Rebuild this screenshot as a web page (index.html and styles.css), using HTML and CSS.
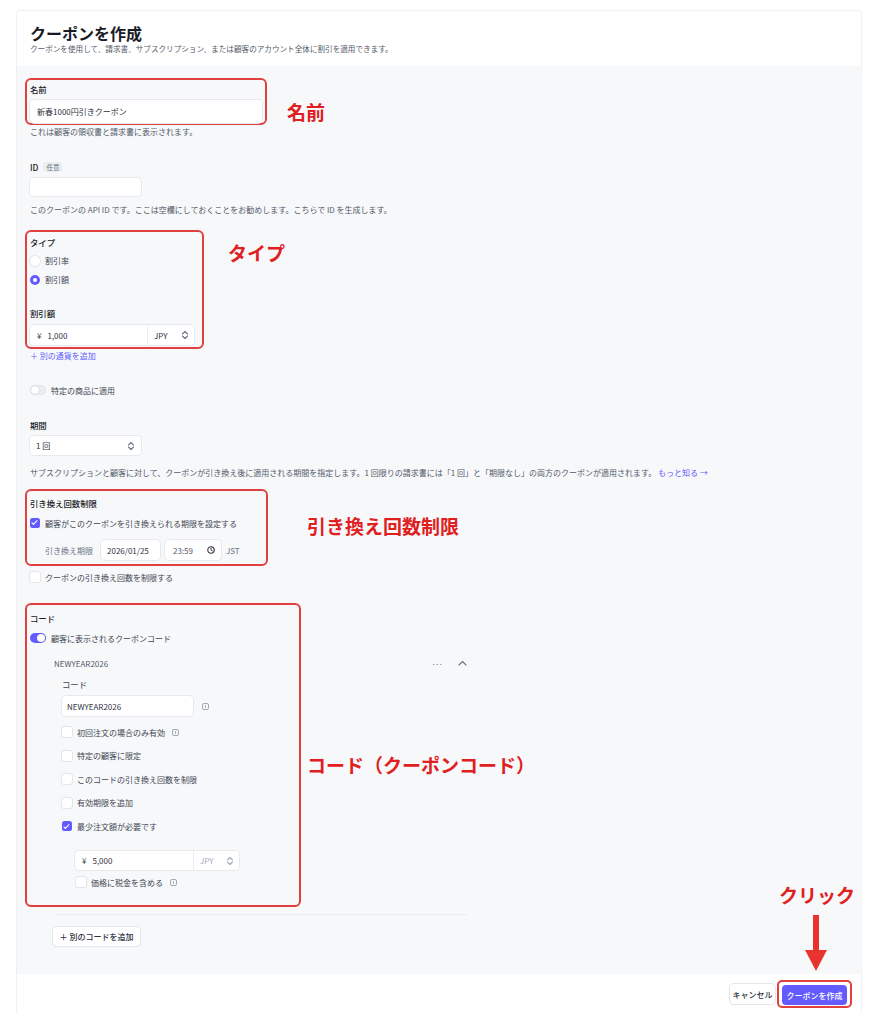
FILE: index.html
```html
<!DOCTYPE html>
<html lang="ja">
<head>
<meta charset="utf-8">
<title>クーポンを作成</title>
<link rel="stylesheet" href="styles.css">
</head>
<body>
<div class="card">
  <header class="head">
    <h1 class="title">クーポンを作成</h1>
    <p class="subtitle">クーポンを使用して、請求書、サブスクリプション、または顧客のアカウント全体に割引を適用できます。</p>
  </header>

  <main class="body">
    <section class="hl hl-name">
      <div class="label">名前</div>
      <div class="input input-name">新春1000円引きクーポン</div>
      <span class="note note-name">名前</span>
    </section>
    <p class="help">これは顧客の領収書と請求書に表示されます。</p>

    <div class="label label-id">ID <span class="badge">任意</span></div>
    <div class="input input-id"></div>
    <p class="help help-id">このクーポンの API ID です。ここは空欄にしておくことをお勧めします。こちらで ID を生成します。</p>

    <section class="hl hl-type">
      <div class="label">タイプ</div>
      <div class="opt-row"><span class="radio"></span>割引率</div>
      <div class="opt-row"><span class="radio on"></span>割引額</div>
      <div class="label label-amount">割引額</div>
      <div class="input money money-type">
        <span class="yen">¥</span><span class="amount">1,000</span>
        <span class="cur">JPY
          <svg class="chev" width="8" height="10" viewBox="0 0 8 10"><path d="M1.5 4 L4 1.5 L6.5 4 M1.5 6 L4 8.5 L6.5 6" fill="none" stroke="#687385" stroke-width="1.1" stroke-linecap="round" stroke-linejoin="round"/></svg>
        </span>
      </div>
      <span class="note note-type">タイプ</span>
    </section>
    <div class="link add-currency">＋ 別の通貨を追加</div>

    <div class="toggle-row toggle-products"><span class="toggle"></span>特定の商品に適用</div>

    <div class="label label-period">期間</div>
    <div class="input select-period">
      <span>1 回</span>
      <svg class="chev" width="8" height="10" viewBox="0 0 8 10"><path d="M1.5 4 L4 1.5 L6.5 4 M1.5 6 L4 8.5 L6.5 6" fill="none" stroke="#687385" stroke-width="1.1" stroke-linecap="round" stroke-linejoin="round"/></svg>
    </div>
    <p class="help help-period">サブスクリプションと顧客に対して、クーポンが引き換え後に適用される期間を指定します。1 回限りの請求書には「1 回」と「期限なし」の両方のクーポンが適用されます。 <span class="link">もっと知る →</span></p>

    <section class="hl hl-limit">
      <div class="label">引き換え回数制限</div>
      <div class="check-row check-deadline"><span class="check on"></span>顧客がこのクーポンを引き換えられる期限を設定する</div>
      <div class="date-row">
        <span class="date-label">引き換え期限</span>
        <span class="input date-input">2026/01/25</span>
        <span class="input time-input">23:59
          <svg width="8" height="8" viewBox="0 0 8 8"><circle cx="4" cy="4" r="3.2" fill="none" stroke="#30313d" stroke-width="1.1"/><path d="M4 2.2 V4 L5.3 4.9" fill="none" stroke="#30313d" stroke-width="1" stroke-linecap="round"/></svg>
        </span>
        <span class="tz">JST</span>
      </div>
      <span class="note note-limit">引き換え回数制限</span>
    </section>
    <div class="check-row check-count"><span class="check"></span>クーポンの引き換え回数を制限する</div>

    <section class="hl hl-code">
      <div class="label">コード</div>
      <div class="toggle-row toggle-code"><span class="toggle on"></span>顧客に表示されるクーポンコード</div>
      <div class="code-head">
        <span class="code-name">NEWYEAR2026</span>
        <span class="code-actions">
          <span class="dots">···</span>
          <svg width="9" height="6" viewBox="0 0 9 6"><path d="M1 5 L4.5 1.5 L8 5" fill="none" stroke="#687385" stroke-width="1.1" stroke-linecap="round" stroke-linejoin="round"/></svg>
        </span>
      </div>
      <div class="code-body">
        <div class="label label-code">コード</div>
        <div class="code-input-row">
          <div class="input code-input">NEWYEAR2026</div>
          <svg class="info" width="7" height="7" viewBox="0 0 7 7"><rect x="0.5" y="0.5" width="6" height="6" rx="1.5" fill="none" stroke="#8d95a3" stroke-width="0.8"/><path d="M3.5 2.2 V4.8" stroke="#8d95a3" stroke-width="0.8"/></svg>
        </div>
        <div class="check-row code-check"><span class="check"></span>初回注文の場合のみ有効
          <svg class="info" width="7" height="7" viewBox="0 0 7 7"><rect x="0.5" y="0.5" width="6" height="6" rx="1.5" fill="none" stroke="#8d95a3" stroke-width="0.8"/><path d="M3.5 2.2 V4.8" stroke="#8d95a3" stroke-width="0.8"/></svg>
        </div>
        <div class="check-row code-check"><span class="check"></span>特定の顧客に限定</div>
        <div class="check-row code-check"><span class="check"></span>このコードの引き換え回数を制限</div>
        <div class="check-row code-check"><span class="check"></span>有効期限を追加</div>
        <div class="check-row code-check"><span class="check on"></span>最少注文額が必要です</div>
        <div class="input money money-min">
          <span class="yen">¥</span><span class="amount">5,000</span>
          <span class="cur cur-muted">JPY
            <svg class="chev" width="8" height="10" viewBox="0 0 8 10"><path d="M1.5 4 L4 1.5 L6.5 4 M1.5 6 L4 8.5 L6.5 6" fill="none" stroke="#a3acba" stroke-width="1.1" stroke-linecap="round" stroke-linejoin="round"/></svg>
          </span>
        </div>
        <div class="check-row tax-check"><span class="check"></span>価格に税金を含める
          <svg class="info" width="7" height="7" viewBox="0 0 7 7"><rect x="0.5" y="0.5" width="6" height="6" rx="1.5" fill="none" stroke="#8d95a3" stroke-width="0.8"/><path d="M3.5 2.2 V4.8" stroke="#8d95a3" stroke-width="0.8"/></svg>
        </div>
      </div>
      <span class="note note-code">コード（クーポンコード）</span>
    </section>

    <div class="divider"></div>
    <button class="btn add-code">＋ 別のコードを追加</button>
  </main>

  <footer class="foot">
    <button class="btn cancel">キャンセル</button>
    <div class="hl hl-submit">
      <button class="btn primary">クーポンを作成</button>
      <span class="note note-click">クリック</span>
      <svg class="arrow" width="22" height="56" viewBox="0 0 22 56"><rect x="8" y="0" width="6" height="36" fill="#e8332f"/><path d="M0 35 L22 35 L11 56 Z" fill="#e8332f"/></svg>
    </div>
  </footer>
</div>
</body>
</html>
```

FILE: styles.css
```css
* { box-sizing: border-box; }

body {
  margin: 0;
  background: #ffffff;
  font-family: "Noto Sans CJK JP", "Noto Sans", sans-serif;
  font-size: 8px;
  color: #30313d;
}

.card {
  margin: 11px 0 0 17px;
  width: 844px;
  background: #ffffff;
  box-shadow: 0 0 0 1px #f0f1f4, 0 -1px 2px rgba(0,0,0,0.03);
  border-radius: 3px;
}

.head {
  height: 55px;
  padding: 13px 13px 0 13px;
}

.title {
  margin: 0;
  font-size: 16px;
  line-height: 18px;
  font-weight: 700;
  color: #1a1b25;
}

.subtitle {
  margin: 2px 0 0 0;
  font-size: 7.6px;
  line-height: 10px;
  color: #545969;
}

.body {
  background: #f6f8fa;
  padding: 12px 13px 28px 13px;
}

.label {
  font-size: 8.4px;
  line-height: 14px;
  font-weight: 500;
  color: #1a1b25;
}

.help {
  margin: 0;
  font-size: 8px;
  line-height: 14px;
  color: #545969;
}

.link { color: #635bff; }

.input {
  background: #ffffff;
  border-radius: 4px;
  box-shadow: 0 0 0 1px #e6e9ee, 0 1px 1px rgba(0,0,0,0.04);
  font-size: 8px;
  color: #30313d;
  display: flex;
  align-items: center;
}

/* highlight annotation boxes */
.hl {
  position: relative;
  border: 2px solid #e2403f;
  border-radius: 6px;
  margin-left: -5px;
  padding-left: 3px;
}

.note {
  position: absolute;
  white-space: nowrap;
  font-size: 19px;
  line-height: 20px;
  font-weight: 700;
  color: #e0201f;
}

/* name */
.hl-name { width: 242px; padding-top: 2px; }
.input-name { margin-top: 4px; width: 232px; height: 23px; padding-left: 7px; }
.note-name { left: 260px; top: 22px; }

.label-id { margin-top: 21px; display: flex; align-items: center; gap: 5px; }
.badge {
  font-size: 6.5px;
  line-height: 10px;
  font-weight: 400;
  color: #687385;
  background: #ebeef1;
  border-radius: 3px;
  padding: 0 3px;
}
.input-id { margin-top: 4px; width: 111px; height: 18px; }
.help-id { margin-top: 7px; }

/* type */
.hl-type { width: 179px; margin-top: 13px; padding-top: 3px; padding-bottom: 2px; }
.opt-row {
  height: 19px;
  display: flex;
  align-items: center;
  gap: 5px;
  color: #414552;
}
.hl-type .label + .opt-row { margin-top: 2px; }
.radio {
  width: 10px;
  height: 10px;
  border-radius: 50%;
  background: #ffffff;
  box-shadow: 0 0 0 1px #e3e6eb;
}
.radio.on {
  background: #ffffff;
  box-shadow: none;
  border: 3px solid #635bff;
}
.label-amount { margin-top: 17px; }

.money { position: relative; }
.money-type { margin-top: 5px; width: 164px; height: 20px; }
.yen { margin-left: 7px; color: #414552; }
.amount { margin-left: 6px; }
.cur {
  margin-left: auto;
  height: 100%;
  display: flex;
  align-items: center;
  border-left: 1px solid #ebeef1;
  padding-left: 6px;
  padding-right: 5px;
}
.money-type .cur { width: 47px; justify-content: space-between; }
.cur-muted { color: #a3acba; }
.note-type { left: 201px; top: 11px; }

.add-currency { line-height: 14px; font-size: 8px; }

/* toggles */
.toggle-row {
  display: flex;
  align-items: center;
  gap: 5px;
  color: #414552;
}
.toggle {
  position: relative;
  width: 16px;
  height: 10px;
  border-radius: 5px;
  background: #ebeef1;
  box-shadow: inset 0 0 0 1px #e3e6eb;
}
.toggle::after {
  content: "";
  position: absolute;
  top: 1px;
  left: 1px;
  width: 8px;
  height: 8px;
  border-radius: 50%;
  background: #ffffff;
  box-shadow: 0 0 1px rgba(0,0,0,0.3);
}
.toggle.on { background: #635bff; box-shadow: none; }
.toggle.on::after { left: 7px; }
.toggle-products { margin-top: 19px; height: 16px; }

.label-period { margin-top: 20px; }
.select-period {
  margin-top: 4px;
  width: 111px;
  height: 19px;
  padding: 0 6px;
  justify-content: space-between;
}
.help-period { margin-top: 11px; }

/* limits */
.hl-limit { width: 243px; margin-top: 9px; padding-top: 5px; padding-bottom: 4px; }
.check-row {
  display: flex;
  align-items: center;
  gap: 5px;
  color: #414552;
  height: 14px;
}
.check {
  position: relative;
  width: 10px;
  height: 10px;
  border-radius: 2.5px;
  background: #ffffff;
  box-shadow: 0 0 0 1px #e3e6eb;
  flex: none;
}
.check.on { background: #635bff; box-shadow: none; }
.check.on::after {
  content: "";
  position: absolute;
  left: 3.3px;
  top: 1.4px;
  width: 2.4px;
  height: 4.8px;
  border: solid #ffffff;
  border-width: 0 1.3px 1.3px 0;
  transform: rotate(45deg);
}
.check-deadline { margin-top: 6px; }
.date-row {
  margin-top: 10px;
  height: 20px;
  display: flex;
  align-items: center;
  padding-left: 15px;
}
.date-label { color: #687385; width: 56px; }
.date-input { height: 20px; width: 59px; padding-left: 6px; }
.time-input {
  height: 20px;
  width: 56px;
  margin-left: 5px;
  padding: 0 6px 0 8px;
  justify-content: space-between;
  color: #545969;
}
.tz { margin-left: 5px; color: #687385; }
.note-limit { left: 280px; top: 25px; }
.check-count { margin-top: 4px; }

/* code */
.hl-code { width: 276px; margin-top: 19px; padding-top: 6px; padding-bottom: 16px; }
.toggle-code { margin-top: 6px; height: 14px; }
.code-head {
  margin-top: 11px;
  margin-left: 24px;
  width: 413px;
  height: 14px;
  display: flex;
  align-items: center;
  justify-content: space-between;
  color: #545969;
}
.code-actions { display: flex; align-items: center; gap: 16px; color: #687385; }
.dots { font-size: 8px; letter-spacing: -1px; }
.code-body { margin-left: 32px; }
.label-code { margin-top: 7px; font-weight: 400; color: #414552; }
.code-input-row { margin-top: 5px; display: flex; align-items: center; gap: 9px; }
.code-input { width: 131px; height: 20px; padding-left: 5px; }
.info { flex: none; }
.code-check { height: 23.5px; }
.code-input-row + .code-check { margin-top: 4.5px; }
.code-check .info { margin-left: 2px; }
.money-min { margin-top: 13px; margin-left: 13px; width: 164px; height: 19px; }
.money-min .cur { width: 46px; justify-content: space-between; }
.tax-check { margin-top: 5px; margin-left: 14px; }
.tax-check .info { margin-left: 2px; }
.note-code { left: 280px; top: 150px; }

.divider {
  margin-top: 7px;
  margin-left: 25px;
  width: 412px;
  border-top: 1px solid #ebeef1;
}

.btn {
  font-family: inherit;
  font-size: 8px;
  font-weight: 500;
  border: none;
  border-radius: 4px;
  padding: 0;
  cursor: pointer;
}

.add-code {
  display: block;
  margin-top: 12px;
  margin-left: 23px;
  width: 87px;
  height: 19px;
  background: #ffffff;
  color: #30313d;
  box-shadow: 0 0 0 1px #e3e6eb, 0 1px 1px rgba(0,0,0,0.06);
}

/* footer */
.foot {
  height: 40px;
  display: flex;
  align-items: center;
  justify-content: flex-end;
  padding-right: 9px;
}
.cancel {
  width: 45px;
  height: 20px;
  margin-right: 2px;
  background: #ffffff;
  color: #30313d;
  box-shadow: 0 0 0 1px #e3e6eb, 0 1px 1px rgba(0,0,0,0.06);
}
.hl-submit {
  margin-left: 0;
  padding: 3px 3px 1px 3px;
  border-radius: 5px;
}
.primary {
  display: block;
  width: 65px;
  height: 20px;
  background: #635bff;
  color: #ffffff;
}
.note-click { left: 0; top: -97px; }
.arrow { position: absolute; left: 26px; top: -67px; }
```
